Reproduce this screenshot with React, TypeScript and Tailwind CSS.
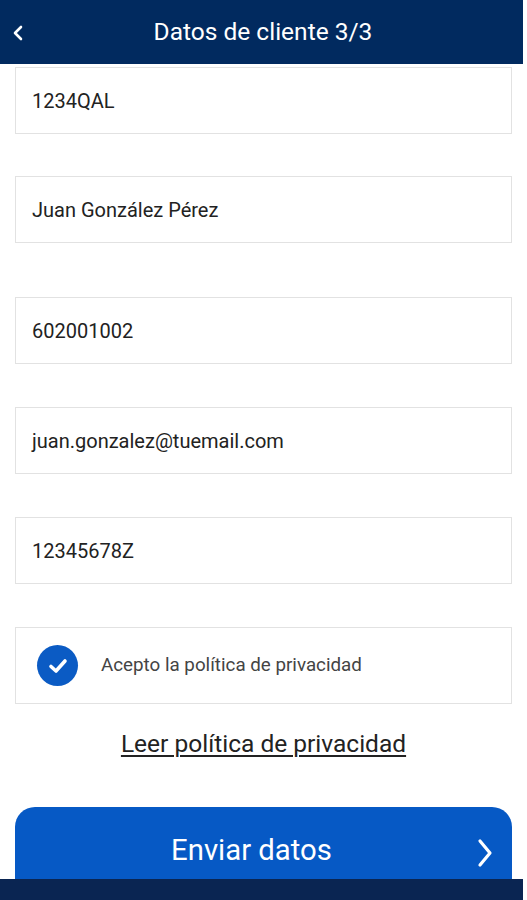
import React from 'react';

const fields = [
  { value: '1234QAL', mt: 'mt-[3px]' },
  { value: 'Juan González Pérez', mt: 'mt-[42px]' },
  { value: '602001002', mt: 'mt-[54px]' },
  { value: 'juan.gonzalez@tuemail.com', mt: 'mt-[43px]' },
  { value: '12345678Z', mt: 'mt-[43px]' },
];

const App: React.FC = () => {
  return (
    <div className="w-[527px] h-[900px] bg-white overflow-hidden flex flex-col font-['Roboto',sans-serif]">
      {/* Header */}
      <div className="w-[523px] h-[64px] shrink-0 bg-[#012a5f] flex items-center relative">
        <svg className="absolute left-[12px] top-[25px]" width="12" height="16" viewBox="0 0 12 16">
          <path d="M9 2 L3 8 L9 14" fill="none" stroke="white" strokeWidth="2.6" strokeLinecap="round" strokeLinejoin="round" />
        </svg>
        <div className="w-full text-center text-white text-[24.5px] leading-none pl-[3px]">Datos de cliente 3/3</div>
      </div>

      {/* Form */}
      <div className="flex-1 flex flex-col px-[15px] w-[527px]">
        {fields.map((f) => (
          <div
            key={f.value}
            className={`${f.mt} h-[67px] w-[497px] border border-[#e2e2e2] flex items-center pl-[16px] text-[20px] text-[#222]`}
          >
            {f.value}
          </div>
        ))}

        <div className="mt-[43px] h-[77px] w-[497px] border border-[#e2e2e2] flex items-center">
          <div className="ml-[21px] w-[41px] h-[41px] rounded-full bg-[#0b5bc4] flex items-center justify-center">
            <svg width="22" height="18" viewBox="0 0 22 18">
              <path d="M4 9.5 L9 14 L18 4" fill="none" stroke="white" strokeWidth="3.6" strokeLinecap="round" strokeLinejoin="round" />
            </svg>
          </div>
          <span className="ml-[23px] text-[18.8px] text-[#444]">Acepto la política de privacidad</span>
        </div>

        <div className="mt-[22px] text-center">
          <span className="text-[24.5px] text-[#222] underline underline-offset-[3px] decoration-[1.5px]">Leer política de privacidad</span>
        </div>

        <div className="mt-[44px] h-[90px] w-[497px] shrink-0 bg-[#0659c5] rounded-t-[20px] flex items-start pt-[29px] relative">
          <div className="w-full text-center text-white text-[29.3px] leading-none pr-[24px]">Enviar datos</div>
          <svg className="absolute right-[17px] top-[31px]" width="20" height="30" viewBox="0 0 20 30">
            <path d="M5 3 L15 15 L5 27" fill="none" stroke="white" strokeWidth="3.2" strokeLinecap="round" strokeLinejoin="round" />
          </svg>
        </div>
      </div>

      {/* Bottom bar */}
      <div className="absolute left-0 top-[879px] w-[523px] h-[21px] bg-[#0a2552]" />
    </div>
  );
};

export default App;
